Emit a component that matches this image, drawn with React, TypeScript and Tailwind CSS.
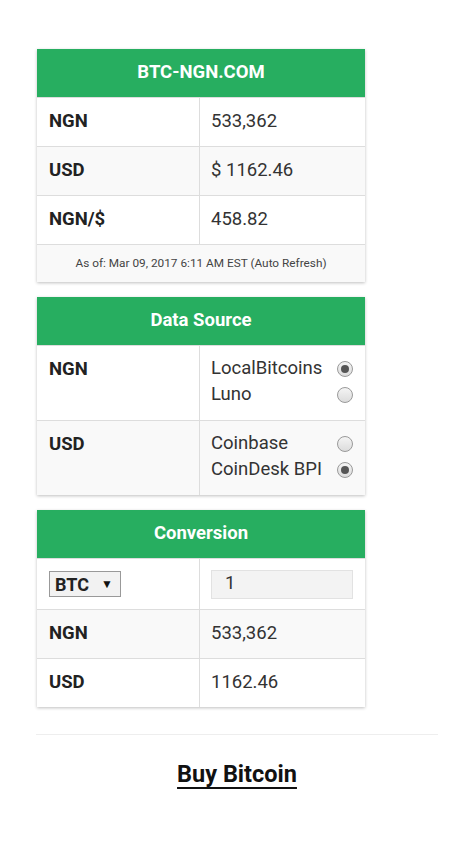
import React from "react";

const font = { fontFamily: "Roboto, 'Liberation Sans', sans-serif" };

function Header({ children }: { children: React.ReactNode }) {
  return (
    <div className="h-[48px] bg-[#27ae60] text-white font-bold text-[18.5px] flex items-center justify-center">
      {children}
    </div>
  );
}

function Row({ label, value, grey }: { label: React.ReactNode; value: React.ReactNode; grey?: boolean }) {
  return (
    <div className={`grid grid-cols-[163px_1fr] h-[49px] border-t border-[#dddddd] ${grey ? "bg-[#f9f9f9]" : "bg-white"}`}>
      <div className="flex items-center pl-[12px] font-bold text-[18.5px] text-[#222] border-r border-[#dddddd]">{label}</div>
      <div className="flex items-center pl-[11px] text-[18.5px] text-[#333]">{value}</div>
    </div>
  );
}

function Radio({ checked }: { checked?: boolean }) {
  return (
    <span className="w-[16px] h-[16px] rounded-full border border-[#9a9a9a] bg-gradient-to-b from-[#f4f4f4] to-[#dcdcdc] flex items-center justify-center">
      {checked && <span className="w-[8px] h-[8px] rounded-full bg-[#555]" />}
    </span>
  );
}

function SourceRow({ label, options, grey }: { label: string; options: [string, boolean][]; grey?: boolean }) {
  return (
    <div className={`grid grid-cols-[163px_1fr] h-[75px] border-t border-[#dddddd] ${grey ? "bg-[#f9f9f9]" : "bg-white"}`}>
      <div className="pl-[12px] pt-[12px] font-bold text-[18.5px] leading-[22px] text-[#222] border-r border-[#dddddd]">{label}</div>
      <div className="pl-[11px] pr-[12px] pt-[10px] flex flex-col">
        {options.map(([name, checked]) => (
          <div key={name} className="flex items-center justify-between h-[26px] text-[18.5px] text-[#333]">
            <span>{name}</span>
            <Radio checked={checked} />
          </div>
        ))}
      </div>
    </div>
  );
}

function Card({ children, className = "" }: { children: React.ReactNode; className?: string }) {
  return (
    <div className={`w-[328px] bg-white shadow-[0_1px_3px_rgba(0,0,0,0.25)] ${className}`}>{children}</div>
  );
}

export default function App() {
  return (
    <div className="min-h-[842px] bg-white" style={font}>
      <div className="w-[402px] mx-auto pt-[49px]">
        <div className="pl-[1px]">
          <Card>
            <Header>BTC-NGN.COM</Header>
            <Row label="NGN" value="533,362" />
            <Row label="USD" value="$ 1162.46" grey />
            <Row label="NGN/$" value="458.82" />
            <div className="h-[38px] border-t border-[#dddddd] bg-[#f9f9f9] flex items-center justify-center text-[11.8px] text-[#444]">
              As of: Mar 09, 2017 6:11 AM EST (Auto Refresh)
            </div>
          </Card>

          <Card className="mt-[15px]">
            <Header>Data Source</Header>
            <SourceRow label="NGN" options={[["LocalBitcoins", true], ["Luno", false]]} />
            <SourceRow label="USD" options={[["Coinbase", false], ["CoinDesk BPI", true]]} grey />
          </Card>

          <Card className="mt-[15px]">
            <Header>Conversion</Header>
            <div className="grid grid-cols-[163px_1fr] h-[51px] border-t border-[#dddddd] bg-white">
              <div className="flex items-center pl-[12px] border-r border-[#dddddd]">
                <div className="w-[72px] h-[26px] border border-[#999] bg-[#f2f2f2] flex items-center justify-between pl-[5px] pr-[7px]">
                  <span className="font-bold text-[18px] text-[#222]">BTC</span>
                  <span className="text-[12px] text-[#111]">▼</span>
                </div>
              </div>
              <div className="flex items-center pl-[11px] pr-[11px]">
                <div className="w-[142px] h-[29px] bg-[#f3f3f3] border border-[#e2e2e2] flex items-center pl-[13px] text-[18.5px] text-[#333]">
                  1
                </div>
              </div>
            </div>
            <Row label="NGN" value="533,362" grey />
            <Row label="USD" value="1162.46" />
          </Card>
        </div>

        <div className="mt-[27px] border-t border-[#eeeeee]" />
        <div className="flex justify-center pt-[22px]">
          <span className="font-bold text-[23.5px] text-[#111] underline decoration-[1.5px] underline-offset-[5px]">
            Buy Bitcoin
          </span>
        </div>
      </div>
    </div>
  );
}
